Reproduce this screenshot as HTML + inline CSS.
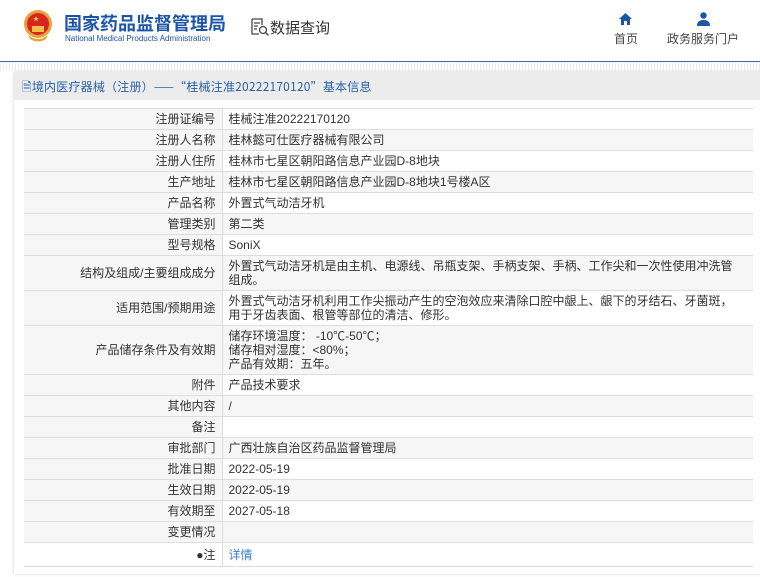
<!DOCTYPE html>
<html><head><meta charset="utf-8"><style>
*{margin:0;padding:0;box-sizing:border-box}
body{width:760px;height:577px;overflow:hidden;background:#fff;font-family:"Liberation Sans","Noto Sans CJK SC",sans-serif;font-size:12px;color:#333;position:relative}
.hdr{position:absolute;left:0;top:0;width:760px;height:62px;border-bottom:1px solid #2b6cb0}
.dots{position:absolute;left:0;top:63px;width:760px;height:8px;background:repeating-linear-gradient(90deg,#ececec 0 1px,#fff 1px 3px)}
.panel{position:absolute;left:14px;top:72px;width:750px;height:502px;background:#fff;box-shadow:0 0 3px #ccc}
.tbar{height:28px;background:#ececec;color:#2a62a8;font-size:12px;line-height:30px;padding-left:8px;font-family:"Noto Sans CJK SC","Liberation Sans",sans-serif;letter-spacing:0.2px}
table{position:absolute;left:10px;top:36px;width:729px;border-collapse:collapse}
td{border-top:1px solid #ddd;border-bottom:1px solid #ddd;font-size:12px;line-height:14px;padding:3px 2px 3px 6px;vertical-align:middle}
td.l{width:198px;text-align:right;background:#f6f6f6;border-right:1px solid #ddd;padding-right:6px}
tr:nth-child(even) td.v{background:#f6f6f6}
tr{height:21px}
</style></head><body>
<div class="hdr">
<svg style="position:absolute;left:22px;top:9px" width="32" height="34" viewBox="0 0 32 34"><circle cx="16" cy="15" r="14" fill="#e8a23a"/><circle cx="16" cy="15" r="11" fill="#d6261f"/><path d="M6 26 Q16 34 26 26 L24 30 Q16 35 8 30Z" fill="#e8a23a"/><rect x="10" y="17" width="12" height="6" fill="#f2c14a"/><text x="11" y="12" font-size="6" fill="#f5d04a">★</text></svg>
<div style="position:absolute;left:64px;top:10px;font-size:18px;font-weight:bold;color:#1c55a8">国家药品监督管理局</div>
<div style="position:absolute;left:65px;top:34px;font-size:8px;color:#1c55a8">National Medical Products Administration</div>
<svg style="position:absolute;left:250px;top:17px" width="20" height="20" viewBox="0 0 20 20" fill="none" stroke="#444" stroke-width="1.3"><path d="M2 2h10v6M2 2v15h7M4 6h6M4 9h4M4 12h3"/><circle cx="13" cy="13" r="3.5"/><path d="M15.5 15.5l3 3"/></svg>
<div style="position:absolute;left:270px;top:17px;font-size:15px;color:#333">数据查询</div>
<svg style="position:absolute;left:619px;top:13px" width="13" height="12" viewBox="0 0 13 12"><path d="M6.5 0L0 6h2v6h3V8h3v4h3V6h2z" fill="#1c55a8"/></svg>
<div style="position:absolute;left:614px;top:30px;font-size:12px;color:#444">首页</div>
<svg style="position:absolute;left:697px;top:12px" width="13" height="14" viewBox="0 0 13 14"><circle cx="6.5" cy="3.5" r="3.2" fill="#1c55a8"/><path d="M0 14 Q0 8 6.5 8 Q13 8 13 14z" fill="#1c55a8"/></svg>
<div style="position:absolute;left:667px;top:30px;font-size:12px;color:#444">政务服务门户</div>
</div>
<div class="dots"></div>
<div class="panel">
<div class="tbar">🗎境内医疗器械（注册）——“桂械注准20222170120”基本信息</div>
<table>
<tr><td class="l">注册证编号</td><td class="v">桂械注准20222170120</td></tr>
<tr><td class="l">注册人名称</td><td class="v">桂林懿可仕医疗器械有限公司</td></tr>
<tr><td class="l">注册人住所</td><td class="v">桂林市七星区朝阳路信息产业园D-8地块</td></tr>
<tr><td class="l">生产地址</td><td class="v">桂林市七星区朝阳路信息产业园D-8地块1号楼A区</td></tr>
<tr><td class="l">产品名称</td><td class="v">外置式气动洁牙机</td></tr>
<tr><td class="l">管理类别</td><td class="v">第二类</td></tr>
<tr><td class="l">型号规格</td><td class="v">SoniX</td></tr>
<tr style="height:35px"><td class="l">结构及组成/主要组成成分</td><td class="v">外置式气动洁牙机是由主机、电源线、吊瓶支架、手柄支架、手柄、工作尖和一次性使用冲洗管<br>组成。</td></tr>
<tr style="height:35px"><td class="l">适用范围/预期用途</td><td class="v">外置式气动洁牙机利用工作尖振动产生的空泡效应来清除口腔中龈上、龈下的牙结石、牙菌斑，<br>用于牙齿表面、根管等部位的清洁、修形。</td></tr>
<tr style="height:49px"><td class="l">产品储存条件及有效期</td><td class="v">储存环境温度： -10℃-50℃；<br>储存相对湿度：&lt;80%；<br>产品有效期：五年。</td></tr>
<tr><td class="l">附件</td><td class="v">产品技术要求</td></tr>
<tr><td class="l">其他内容</td><td class="v">/</td></tr>
<tr><td class="l">备注</td><td class="v"></td></tr>
<tr><td class="l">审批部门</td><td class="v">广西壮族自治区药品监督管理局</td></tr>
<tr><td class="l">批准日期</td><td class="v">2022-05-19</td></tr>
<tr><td class="l">生效日期</td><td class="v">2022-05-19</td></tr>
<tr><td class="l">有效期至</td><td class="v">2027-05-18</td></tr>
<tr><td class="l">变更情况</td><td class="v"></td></tr>
<tr style="height:24px"><td class="l" style="background:#fff">●注</td><td class="v" style="color:#3a7fd0;background:#fff">详情</td></tr>
</table>
</div>
</body></html>
